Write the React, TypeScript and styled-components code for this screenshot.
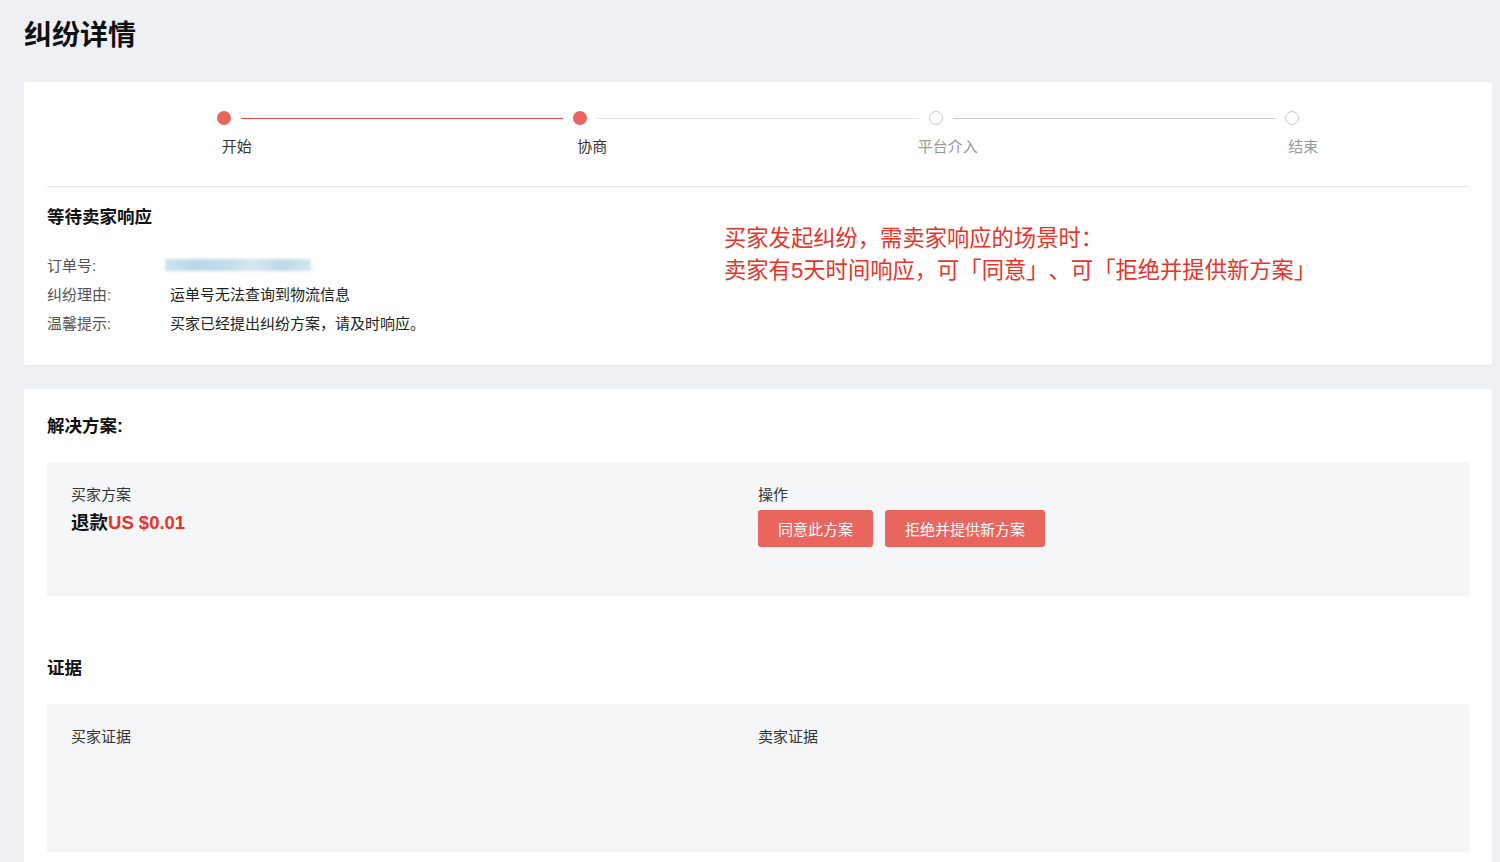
import React from "react";
import styled, { createGlobalStyle } from "styled-components";

const RED = "#e8332a";
const BRAND = "#e9665f";

const GlobalStyle = createGlobalStyle`
  html, body {
    margin: 0;
    padding: 0;
    background: #eff0f4;
  }
  body {
    font-family: "Liberation Sans", "Noto Sans CJK SC", sans-serif;
    color: #222;
  }
  * { box-sizing: border-box; }
`;

const steps = [
  { label: "开始", done: true },
  { label: "协商", done: true },
  { label: "平台介入", done: false },
  { label: "结束", done: false },
];

const infoRows = [
  { label: "订单号:", value: null },
  { label: "纠纷理由:", value: "运单号无法查询到物流信息" },
  { label: "温馨提示:", value: "买家已经提出纠纷方案，请及时响应。" },
];

const App = () => {
  return (
    <>
      <GlobalStyle />
      <Page>
        <PageTitle>纠纷详情</PageTitle>

        <Card>
          <Track>
            {steps.map((step, i) => (
              <React.Fragment key={step.label}>
                <Dot done={step.done} />
                {i < steps.length - 1 && <Tail tone={i === 0 ? "active" : i === 1 ? "light" : "dark"} />}
              </React.Fragment>
            ))}
          </Track>
          <StepLabels>
            {steps.map((step) => (
              <StepLabel key={step.label} done={step.done}>{step.label}</StepLabel>
            ))}
          </StepLabels>
          <Divider />

          <InfoGrid>
            <div>
              <SubTitle>等待卖家响应</SubTitle>
              <Rows>
                {infoRows.map((row) => (
                  <Row key={row.label}>
                    <RowLabel>{row.label}</RowLabel>
                    {row.value ? <RowValue>{row.value}</RowValue> : <Blurred />}
                  </Row>
                ))}
              </Rows>
            </div>
            <Note>
              买家发起纠纷，需卖家响应的场景时：
              <br />
              卖家有5天时间响应，可「同意」、可「拒绝并提供新方案」
            </Note>
          </InfoGrid>
        </Card>

        <Card>
          <SectionTitle>解决方案:</SectionTitle>
          <Panel height={133}>
            <div>
              <PanelLabel>买家方案</PanelLabel>
              <Amount>
                退款<Money>US $0.01</Money>
              </Amount>
            </div>
            <div>
              <PanelLabel>操作</PanelLabel>
              <Actions>
                <ActionButton>同意此方案</ActionButton>
                <ActionButton>拒绝并提供新方案</ActionButton>
              </Actions>
            </div>
          </Panel>

          <SectionTitle spaced>证据</SectionTitle>
          <Panel height={147}>
            <PanelLabel>买家证据</PanelLabel>
            <PanelLabel>卖家证据</PanelLabel>
          </Panel>
        </Card>
      </Page>
    </>
  );
};

export default App;

const Page = styled.div`
  padding: 18px 8px 0 24px;
  display: flex;
  flex-direction: column;
  gap: 24px;
`;

const PageTitle = styled.h1`
  margin: 0 0 4px 0;
  font-size: 28px;
  line-height: 36px;
  font-weight: 700;
  color: #111;
`;

const Card = styled.div`
  background: #fff;
  border-radius: 2px;
  padding: 29px 23px 28px 23px;
  box-shadow: 0 1px 2px rgba(0, 0, 0, 0.03);
`;

const Track = styled.div`
  display: flex;
  align-items: center;
  padding: 0 170px;
  height: 14px;
`;

const Dot = styled.span<{ done: boolean }>`
  flex: 0 0 14px;
  width: 14px;
  height: 14px;
  border-radius: 50%;
  background: ${(p) => (p.done ? BRAND : "#fff")};
  border: ${(p) => (p.done ? "none" : "1.5px solid #c9c9c9")};
`;

const Tail = styled.span<{ tone: "active" | "light" | "dark" }>`
  flex: 1;
  margin: 0 10px;
  height: 1px;
  background: ${(p) => (p.tone === "active" ? "#e8473f" : p.tone === "light" ? "#e4e4e4" : "#c8c8c8")};
`;

const StepLabels = styled.div`
  display: grid;
  grid-template-columns: repeat(4, 1fr);
  margin-top: 12px;
`;

const StepLabel = styled.div<{ done: boolean }>`
  padding-left: 24px;
  text-align: center;
  font-size: 15px;
  line-height: 20px;
  color: ${(p) => (p.done ? "#333" : "#999")};
`;

const Divider = styled.div`
  height: 1px;
  background: #e3e3e3;
  margin: 29px 0 19px 0;
`;

const InfoGrid = styled.div`
  display: grid;
  grid-template-columns: 677px 1fr;
`;

const SubTitle = styled.div`
  font-size: 17.5px;
  line-height: 22px;
  font-weight: 700;
  color: #111;
`;

const Rows = styled.div`
  margin-top: 22px;
  display: flex;
  flex-direction: column;
`;

const Row = styled.div`
  display: flex;
  align-items: center;
  height: 29px;
  font-size: 15px;
`;

const RowLabel = styled.span`
  width: 123px;
  color: #555;
`;

const RowValue = styled.span`
  color: #222;
`;

const Blurred = styled.span`
  display: block;
  width: 146px;
  height: 12px;
  margin-left: -5px;
  background: linear-gradient(90deg, #cfe3ee 0%, #b9d6e6 20%, #c5dce9 45%, #d7e8f0 60%, #bcd7e6 80%, #d4e6ef 100%);
  filter: blur(1.5px);
`;

const Note = styled.div`
  margin-top: 17px;
  font-size: 22.3px;
  line-height: 32px;
  color: ${RED};
  white-space: nowrap;
  text-spacing-trim: space-all;
`;

const SectionTitle = styled.div<{ spaced?: boolean }>`
  margin-top: ${(p) => (p.spaced ? "62px" : "-3px")};
  margin-bottom: 25px;
  font-size: 17.5px;
  line-height: 22px;
  font-weight: 700;
  color: #111;
`;

const Panel = styled.div<{ height: number }>`
  display: grid;
  grid-template-columns: 1fr 1fr;
  align-items: start;
  height: ${(p) => p.height}px;
  padding: 23px 24px;
  background: #f5f6f8;
  box-shadow: 0 1px 2px rgba(0, 0, 0, 0.05);
`;

const PanelLabel = styled.div`
  font-size: 15px;
  line-height: 20px;
  color: #333;
`;

const Amount = styled.div`
  margin-top: 5px;
  font-size: 18.5px;
  line-height: 26px;
  font-weight: 700;
  color: #111;
`;

const Money = styled.span`
  color: ${RED};
`;

const Actions = styled.div`
  display: flex;
  gap: 12px;
  margin-top: 5px;
`;

const ActionButton = styled.button`
  height: 37px;
  padding: 0 20px;
  border: none;
  border-radius: 3px;
  background: ${BRAND};
  color: #fff;
  font-family: inherit;
  font-size: 15px;
  cursor: pointer;
`;
